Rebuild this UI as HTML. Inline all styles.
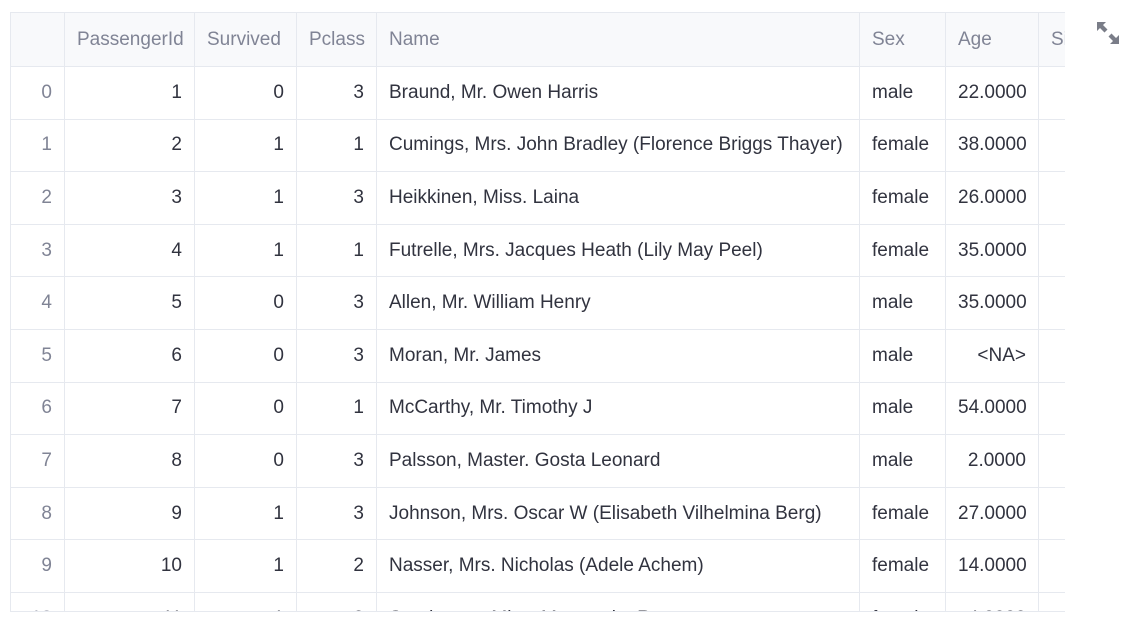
<!DOCTYPE html>
<html><head><style>
body{margin:0;background:#fff;width:1132px;height:631px;overflow:hidden;font-family:"Liberation Sans",sans-serif;}
.wrap{position:absolute;left:10px;top:12px;width:1055px;height:599px;overflow:hidden;border-bottom:1px solid #e6e9ef;}
table{border-collapse:collapse;table-layout:fixed;width:1088px;font-size:19px;color:#31333f;}
td,th{border:1px solid #e6e9ef;height:52.6px;padding:0 12px;white-space:nowrap;overflow:hidden;box-sizing:border-box;}
th{background:#f8f9fb;color:#808495;font-weight:normal;text-align:left;height:54px;}
td{text-align:right;}
td.i{color:#808495;}
td.l{text-align:left;}
</style></head><body>
<div class="wrap">
<table>
<colgroup><col style="width:54px"><col style="width:130px"><col style="width:102px"><col style="width:80px"><col style="width:483px"><col style="width:86px"><col style="width:93px"><col style="width:60px"></colgroup>
<tr><th></th><th>PassengerId</th><th>Survived</th><th>Pclass</th><th>Name</th><th>Sex</th><th>Age</th><th>SibSp</th></tr>
<tr><td class="i">0</td><td>1</td><td>0</td><td>3</td><td class="l">Braund, Mr. Owen Harris</td><td class="l">male</td><td>22.0000</td><td></td></tr>
<tr><td class="i">1</td><td>2</td><td>1</td><td>1</td><td class="l">Cumings, Mrs. John Bradley (Florence Briggs Thayer)</td><td class="l">female</td><td>38.0000</td><td></td></tr>
<tr><td class="i">2</td><td>3</td><td>1</td><td>3</td><td class="l">Heikkinen, Miss. Laina</td><td class="l">female</td><td>26.0000</td><td></td></tr>
<tr><td class="i">3</td><td>4</td><td>1</td><td>1</td><td class="l">Futrelle, Mrs. Jacques Heath (Lily May Peel)</td><td class="l">female</td><td>35.0000</td><td></td></tr>
<tr><td class="i">4</td><td>5</td><td>0</td><td>3</td><td class="l">Allen, Mr. William Henry</td><td class="l">male</td><td>35.0000</td><td></td></tr>
<tr><td class="i">5</td><td>6</td><td>0</td><td>3</td><td class="l">Moran, Mr. James</td><td class="l">male</td><td>&lt;NA&gt;</td><td></td></tr>
<tr><td class="i">6</td><td>7</td><td>0</td><td>1</td><td class="l">McCarthy, Mr. Timothy J</td><td class="l">male</td><td>54.0000</td><td></td></tr>
<tr><td class="i">7</td><td>8</td><td>0</td><td>3</td><td class="l">Palsson, Master. Gosta Leonard</td><td class="l">male</td><td>2.0000</td><td></td></tr>
<tr><td class="i">8</td><td>9</td><td>1</td><td>3</td><td class="l">Johnson, Mrs. Oscar W (Elisabeth Vilhelmina Berg)</td><td class="l">female</td><td>27.0000</td><td></td></tr>
<tr><td class="i">9</td><td>10</td><td>1</td><td>2</td><td class="l">Nasser, Mrs. Nicholas (Adele Achem)</td><td class="l">female</td><td>14.0000</td><td></td></tr>
<tr><td class="i">10</td><td>11</td><td>1</td><td>3</td><td class="l">Sandstrom, Miss. Marguerite Rut</td><td class="l">female</td><td>4.0000</td><td></td></tr>
</table>
</div>
<svg style="position:absolute;left:1096px;top:21px" width="24" height="24" viewBox="0 0 24 24">
<path d="M1 1h9l-3 3 4.5 4.5-3 3L4 7l-3 3z" fill="#7a7d88"/>
<path d="M23 23h-9l3-3-4.5-4.5 3-3L20 17l3-3z" fill="#7a7d88"/>
</svg>
</body></html>
